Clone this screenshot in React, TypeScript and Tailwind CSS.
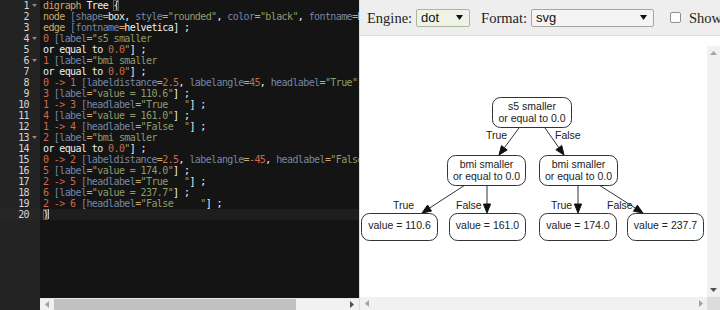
import React from "react";

const LINES: string[] = [
  "digraph Tree {",
  'node [shape=box, style="rounded", color="black", fontname=helvetica] ;',
  "edge [fontname=helvetica] ;",
  '0 [label="s5 smaller',
  'or equal to 0.0"] ;',
  '1 [label="bmi smaller',
  'or equal to 0.0"] ;',
  '0 -> 1 [labeldistance=2.5, labelangle=45, headlabel="True"] ;',
  '3 [label="value = 110.6"] ;',
  '1 -> 3 [headlabel="True   "] ;',
  '4 [label="value = 161.0"] ;',
  '1 -> 4 [headlabel="False  "] ;',
  '2 [label="bmi smaller',
  'or equal to 0.0"] ;',
  '0 -> 2 [labeldistance=2.5, labelangle=-45, headlabel="False"] ;',
  '5 [label="value = 174.0"] ;',
  '2 -> 5 [headlabel="True   "] ;',
  '6 [label="value = 237.7"] ;',
  '2 -> 6 [headlabel="False     "] ;',
  "}",
];

const FOLDS = new Set([0, 3, 5, 12]);

type Tok = [string, string];

const CLS: Record<string, string> = {
  kw: "text-[#CDA869]",
  str: "text-[#8F9D6A]",
  num: "text-[#CF6A4C]",
  attr: "text-[#7587A6]",
  txt: "text-[#F0F0F0]",
  brk: "text-[#F0F0F0] outline outline-1 -outline-offset-1 outline-[#5a5a5a]",
};

function tokenize(line: string): Tok[] {
  const out: Tok[] = [];
  let i = 0;
  while (i < line.length) {
    const c = line[i];
    if (c === '"') {
      const j = line.indexOf('"', i + 1);
      let end: number;
      if (j >= 0) end = j + 1;
      else end = line.slice(i + 1).includes("]") ? i + 1 : line.length;
      out.push([line.slice(i, end), "str"]);
      i = end;
      continue;
    }
    if (line.startsWith("->", i)) {
      out.push(["->", "num"]);
      i += 2;
      continue;
    }
    if (/[0-9]/.test(c) || (c === "-" && /[0-9]/.test(line[i + 1] || ""))) {
      const m = line.slice(i).match(/^-?[0-9.]+/);
      const s = m ? m[0] : c;
      out.push([s, "num"]);
      i += s.length;
      continue;
    }
    if (/[A-Za-z_]/.test(c)) {
      const m = line.slice(i).match(/^[A-Za-z_0-9]+/);
      const w = m ? m[0] : c;
      let t = "txt";
      if (w === "digraph" || w === "node" || w === "edge") t = "kw";
      else if (line[i + w.length] === "=") t = "attr";
      out.push([w, t]);
      i += w.length;
      continue;
    }
    if (c === "=") {
      out.push([c, "kw"]);
      i++;
      continue;
    }
    if (c === "[") {
      out.push([c, "attr"]);
      i++;
      continue;
    }
    if (c === "{" || c === "}") {
      out.push([c, "brk"]);
      i++;
      continue;
    }
    out.push([c, "txt"]);
    i++;
  }
  return out;
}

function Tri({ dir, color, w = 7, h = 4 }: { dir: "up" | "down" | "left" | "right"; color: string; w?: number; h?: number }) {
  let pts = "";
  let vw = w;
  let vh = h;
  if (dir === "down") pts = `0,0 ${w},0 ${w / 2},${h}`;
  if (dir === "up") pts = `0,${h} ${w},${h} ${w / 2},0`;
  if (dir === "left") {
    vw = h;
    vh = w;
    pts = `${h},0 ${h},${w} 0,${w / 2}`;
  }
  if (dir === "right") {
    vw = h;
    vh = w;
    pts = `0,0 0,${w} ${h},${w / 2}`;
  }
  return (
    <svg width={vw} height={vh} viewBox={`0 0 ${vw} ${vh}`}>
      <polygon points={pts} fill={color} />
    </svg>
  );
}

const MONO = { fontFamily: '"DejaVu Sans Mono", "Liberation Mono", monospace' };

function Editor() {
  return (
    <div className="flex w-[359px] h-full shrink-0 bg-[#141414]">
      <div className="w-[40px] h-full bg-[#232323] shrink-0 pt-0 text-[10px] leading-[11px] text-[#d6d6d6] tracking-[-0.6px]" style={MONO}>
        {LINES.map((_, i) => (
          <div key={i} className={`flex h-[11px] items-center ${i === 19 ? "bg-[#262626]" : ""}`}>
            <div className="w-[29px] text-right">{i + 1}</div>
            <div className="w-[11px] flex justify-center">
              {FOLDS.has(i) ? <Tri dir="down" color="#8a8a8a" w={5} h={3} /> : null}
            </div>
          </div>
        ))}
      </div>
      <div className="flex flex-col flex-1 min-w-0 h-full">
        <div className="flex-1 overflow-hidden bg-[#141414] text-[10px] leading-[11px] tracking-[-0.6px] whitespace-pre" style={MONO}>
          {LINES.map((ln, i) => (
            <div key={i} className={`h-[11px] pl-[3px] ${i === 19 ? "bg-[#1e1e1e]" : ""}`}>
              {tokenize(ln).map((t, k) => (
                <span key={k} className={CLS[t[1]]}>
                  {t[0]}
                </span>
              ))}
              {i === 19 ? <span className="inline-block w-[1px] h-[10px] bg-[#bbbbbb] align-[-1px]" /> : null}
            </div>
          ))}
        </div>
        <div className="h-[12px] flex items-stretch bg-[#f1f1f1] border-t border-[#e6e6e6]">
          <div className="w-[14px] flex items-center justify-center">
            <Tri dir="left" color="#a3a3a3" w={7} h={4} />
          </div>
          <div className="w-[242px] bg-[#c1c1c1]" />
          <div className="flex-1" />
          <div className="w-[14px] flex items-center justify-center">
            <Tri dir="right" color="#505050" w={7} h={4} />
          </div>
        </div>
      </div>
    </div>
  );
}

type GNode = { x: number; y: number; w: number; h: number; lines: string[] };

const NODES: GNode[] = [
  { x: 492.5, y: 97.5, w: 79, h: 30, lines: ["s5 smaller", "or equal to 0.0"] },
  { x: 447.5, y: 155.5, w: 78, h: 30, lines: ["bmi smaller", "or equal to 0.0"] },
  { x: 539.5, y: 155.5, w: 78, h: 30, lines: ["bmi smaller", "or equal to 0.0"] },
  { x: 361.5, y: 213.5, w: 76, h: 27, lines: ["value = 110.6"] },
  { x: 449.5, y: 213.5, w: 76, h: 27, lines: ["value = 161.0"] },
  { x: 539.5, y: 213.5, w: 77, h: 27, lines: ["value = 174.0"] },
  { x: 627.5, y: 213.5, w: 76, h: 27, lines: ["value = 237.7"] },
];

const EDGES: [number, number, number, number][] = [
  [519, 128, 499, 155],
  [545, 128, 564, 155],
  [465, 185, 422, 213],
  [487, 185, 487, 213],
  [578, 185, 578, 213],
  [599, 185, 643, 213],
];

const ELABELS: [string, number, number][] = [
  ["True", 486, 139],
  ["False", 555, 139],
  ["True", 393, 209],
  ["False", 456, 209],
  ["True", 551, 209],
  ["False", 607, 209],
];

function Arrow({ e }: { e: [number, number, number, number] }) {
  const [x1, y1, x2, y2] = e;
  const dx = x2 - x1;
  const dy = y2 - y1;
  const len = Math.hypot(dx, dy);
  const ux = dx / len;
  const uy = dy / len;
  const L = 9;
  const W = 3.6;
  const bx = x2 - ux * L;
  const by = y2 - uy * L;
  const px = -uy * W;
  const py = ux * W;
  return (
    <g>
      <line x1={x1} y1={y1} x2={bx} y2={by} stroke="#333" strokeWidth={1} />
      <polygon points={`${x2},${y2} ${bx + px},${by + py} ${bx - px},${by - py}`} fill="#111" stroke="#111" strokeWidth={1} />
    </g>
  );
}

function Graph() {
  return (
    <svg width={347} height={251} className="block" style={{ fontFamily: '"Liberation Sans", Arial, sans-serif' }}>
      <g transform="translate(-360,-46)">
        {EDGES.map((e, i) => (
          <Arrow key={i} e={e} />
        ))}
        {NODES.map((n, i) => (
          <g key={i}>
            <rect x={n.x} y={n.y} width={n.w} height={n.h} rx={8} ry={8} fill="white" stroke="#333" strokeWidth={1} />
            {n.lines.length === 2 ? (
              <>
                <text x={n.x + n.w / 2} y={n.y + 12.5} textAnchor="middle" fontSize={10.5} fill="#222">
                  {n.lines[0]}
                </text>
                <text x={n.x + n.w / 2} y={n.y + 24.5} textAnchor="middle" fontSize={10.5} fill="#222">
                  {n.lines[1]}
                </text>
              </>
            ) : (
              <text x={n.x + n.w / 2} y={n.y + 15.5} textAnchor="middle" fontSize={10.5} fill="#222">
                {n.lines[0]}
              </text>
            )}
          </g>
        ))}
        {ELABELS.map(([t, x, y], i) => (
          <text key={i} x={x} y={y} fontSize={10.5} fill="#222">
            {t}
          </text>
        ))}
      </g>
    </svg>
  );
}

function Viewer() {
  const serif = { fontFamily: '"Liberation Serif", "Times New Roman", serif' };
  const sans = { fontFamily: '"Liberation Sans", Arial, sans-serif' };
  return (
    <div className="flex flex-col flex-1 min-w-0 h-full bg-white border-l border-[#dcdcdc]">
      <div className="h-[36px] shrink-0 bg-[#eeeeee] border-b border-[#dadada] flex items-center pl-[7px] whitespace-nowrap overflow-hidden text-[#222]">
        <span className="text-[14.5px] leading-[18px] shrink-0" style={serif}>
          Engine:
        </span>
        <div className="ml-[4px] w-[54px] h-[18px] shrink-0 border border-[#a9b79a] bg-[#eef2e7] rounded-[2px] flex items-center justify-between pl-[4px] pr-[6px]">
          <span className="text-[13px] leading-[15px] text-[#111]" style={sans}>
            dot
          </span>
          <Tri dir="down" color="#111" w={7} h={5} />
        </div>
        <span className="ml-[11px] text-[14.5px] leading-[18px] shrink-0" style={serif}>
          Format:
        </span>
        <div className="ml-[4px] w-[123px] h-[18px] shrink-0 border border-[#a6a6a6] bg-[#f4f4f4] rounded-[2px] flex items-center justify-between pl-[4px] pr-[6px]">
          <span className="text-[13px] leading-[15px] text-[#111]" style={sans}>
            svg
          </span>
          <Tri dir="down" color="#111" w={7} h={5} />
        </div>
        <div className="ml-[16px] w-[11px] h-[11px] shrink-0 border border-[#8f8f8f] bg-white rounded-[2px]" />
        <span className="ml-[8px] text-[14.5px] leading-[18px] shrink-0" style={serif}>
          Show
        </span>
      </div>
      <div className="h-[10px] shrink-0 bg-white" />
      <div className="flex flex-1 min-h-0">
        <div className="flex-1 min-w-0 overflow-hidden bg-white">
          <Graph />
        </div>
        <div className="w-[13px] shrink-0 bg-[#f1f1f1] flex flex-col justify-between">
          <div className="h-[14px] flex items-center justify-center">
            <Tri dir="up" color="#a3a3a3" w={7} h={4} />
          </div>
          <div className="h-[14px] flex items-center justify-center">
            <Tri dir="down" color="#505050" w={7} h={4} />
          </div>
        </div>
      </div>
      <div className="h-[13px] shrink-0 flex">
        <div className="flex-1 bg-[#f1f1f1] flex items-center justify-between">
          <div className="w-[13px] flex items-center justify-center">
            <Tri dir="left" color="#a3a3a3" w={7} h={4} />
          </div>
          <div className="w-[13px] flex items-center justify-center">
            <Tri dir="right" color="#a3a3a3" w={7} h={4} />
          </div>
        </div>
        <div className="w-[13px] bg-[#dcdcdc]" />
      </div>
    </div>
  );
}

export default function App() {
  return (
    <div className="w-[720px] h-[310px] flex overflow-hidden">
      <Editor />
      <Viewer />
    </div>
  );
}
